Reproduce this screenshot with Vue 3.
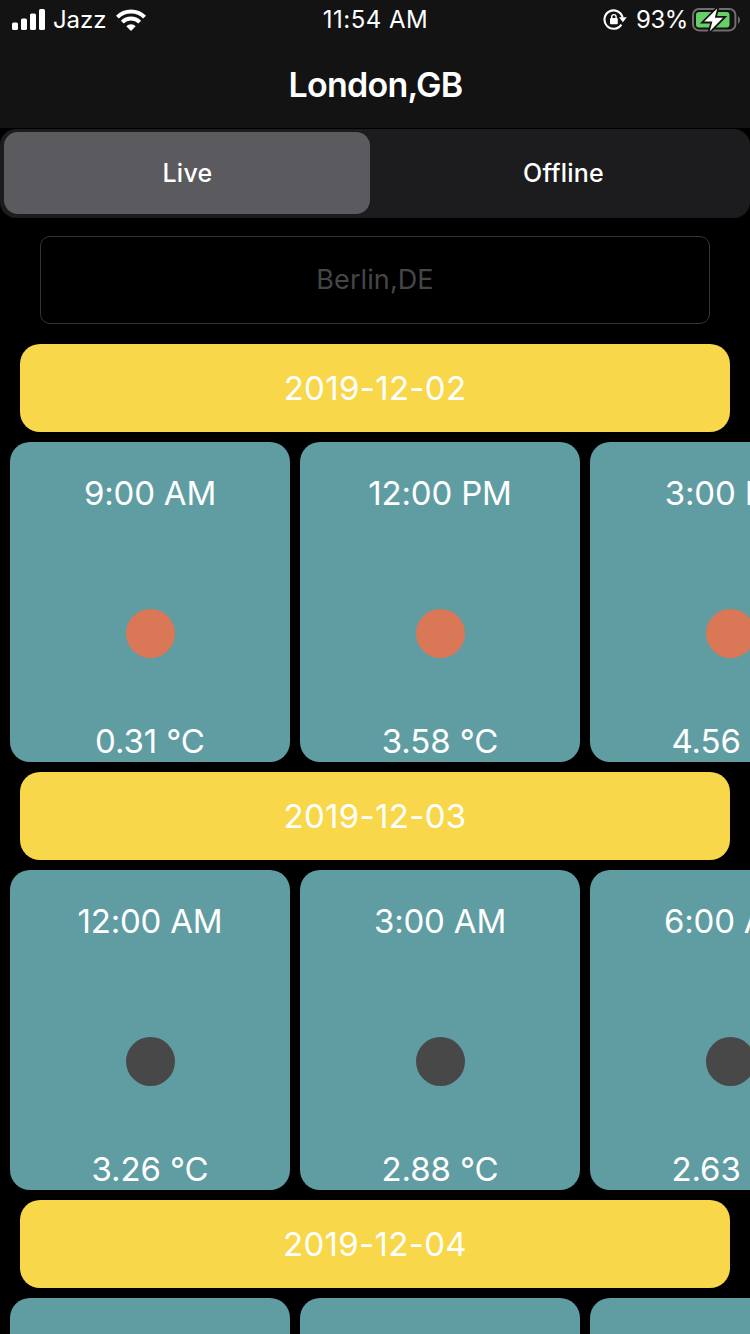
<script setup>
import { ref } from 'vue'

const modes = ['Live', 'Offline']
const mode = ref('Live')
const city = ref('')

const days = [
  {
    date: '2019-12-02',
    slots: [
      { time: '9:00 AM', temp: '0.31 °C', sky: 'sunny' },
      { time: '12:00 PM', temp: '3.58 °C', sky: 'sunny' },
      { time: '3:00 PM', temp: '4.56 °C', sky: 'sunny' },
    ],
  },
  {
    date: '2019-12-03',
    slots: [
      { time: '12:00 AM', temp: '3.26 °C', sky: 'night' },
      { time: '3:00 AM', temp: '2.88 °C', sky: 'night' },
      { time: '6:00 AM', temp: '2.63 °C', sky: 'night' },
    ],
  },
  {
    date: '2019-12-04',
    slots: [{ time: '', temp: '' }, { time: '', temp: '' }, { time: '', temp: '' }],
  },
]
</script>

<template>
  <main class="screen">
    <header class="top">
      <div class="status">
        <div class="side">
          <svg class="signal" width="34" height="22" viewBox="0 0 34 22" fill="#fff">
            <rect x="0" y="13.5" width="6" height="7.5" rx="1.6" />
            <rect x="9" y="9.5" width="6" height="11.5" rx="1.6" />
            <rect x="18" y="4.5" width="6" height="16.5" rx="1.6" />
            <rect x="27" y="0" width="6" height="21" rx="1.6" />
          </svg>
          <span class="carrier">Jazz</span>
          <svg class="wifi" width="30" height="22" viewBox="0 0 30 22" fill="none" stroke="#fff">
            <path d="M1.4 8.2a19.2 19.2 0 0 1 27.2 0" stroke-width="4" />
            <path d="M6.3 13.1a12.3 12.3 0 0 1 17.4 0" stroke-width="3.8" />
            <path d="M15 22l-4.7-4.8a6.6 6.6 0 0 1 9.4 0z" fill="#fff" stroke="none" />
          </svg>
        </div>
        <div class="clock">11:54 AM</div>
        <div class="side end">
          <svg class="lock" width="24" height="22" viewBox="0 0 24 22" fill="none">
            <path d="M19.6 8.4A9.2 9.2 0 1 0 18.4 15.6" stroke="#fff" stroke-width="2.1" />
            <path d="M16 8.2h7.8L19.9 13.2z" fill="#fff" />
            <rect x="7" y="9" width="7.8" height="6.2" rx="1" fill="#fff" />
            <path d="M8.7 9.6V7.8a2.2 2.2 0 0 1 4.4 0V9.6" stroke="#fff" stroke-width="1.4" />
          </svg>
          <span class="percent">93%</span>
          <svg class="battery" width="50" height="26" viewBox="0 0 50 26">
            <rect x="1" y="2" width="42.4" height="21.4" rx="6" fill="none" stroke="#6f6f6f" stroke-width="2" />
            <path d="M46 9v8q2-1.3 2-4t-2-4z" fill="#6f6f6f" />
            <rect x="4" y="5" width="33.5" height="15.5" rx="3" fill="#65cf68" />
            <path d="M25.2 1.5L12.2 14.6h8.2l-2.6 9.6 13.2-13.4h-8.2z" fill="#fff" stroke="#131313" stroke-width="3.6" paint-order="stroke" />
          </svg>
        </div>
      </div>
      <h1 class="title">London,GB</h1>
    </header>

    <div class="segmented">
      <button
        v-for="m in modes"
        :key="m"
        class="segment"
        :class="{ active: m === mode }"
        @click="mode = m"
      >{{ m }}</button>
    </div>

    <input v-model="city" class="city" placeholder="Berlin,DE" />

    <section v-for="day in days" :key="day.date" class="day">
      <h2 class="date">{{ day.date }}</h2>
      <div class="slots">
        <article v-for="(slot, i) in day.slots" :key="i" class="slot">
          <div class="time">{{ slot.time }}</div>
          <div class="dot" :class="slot.sky"></div>
          <div class="temp">{{ slot.temp }}</div>
        </article>
      </div>
    </section>
  </main>
</template>

<style>
body {
  background: #000;
}
</style>

<style scoped>
.screen {
  width: 750px;
  height: 1334px;
  overflow: hidden;
  background: #000;
  color: #fff;
  font-family: Inter, "Liberation Sans", sans-serif;
}

.top {
  height: 128px;
  background: #131313;
}

.status {
  display: grid;
  grid-template-columns: 1fr auto 1fr;
  align-items: center;
  height: 40px;
  font-size: 24px;
}

.side {
  display: flex;
  align-items: center;
  padding-left: 12px;
}

.end {
  justify-content: flex-end;
  padding: 0 8px 0 0;
}

.carrier {
  margin: 0 10px 2px 7px;
  letter-spacing: -0.1px;
}

.clock {
  margin-bottom: 1px;
  padding-left: 1px;
  font-size: 24px;
  letter-spacing: 0.5px;
}

.percent {
  margin: 0 4px 1px 9px;
  letter-spacing: -0.4px;
}

.title {
  margin: 23px 0 0;
  padding-left: 1px;
  font-size: 34px;
  line-height: 44px;
  font-weight: 600;
  letter-spacing: -0.75px;
  text-align: center;
}

.segmented {
  display: flex;
  box-sizing: border-box;
  height: 89px;
  margin-top: 1px;
  padding: 3px 4px 4px;
  gap: 10px;
  border-radius: 16px;
  background: #1c1c1e;
}

.segment {
  flex: 1;
  padding: 0 0 0 1px;
  border: 0;
  border-radius: 14px;
  background: none;
  color: #fff;
  font: 500 25px Inter, "Liberation Sans", sans-serif;
  letter-spacing: 0.2px;
}

.active {
  background: #5b5a5f;
  letter-spacing: 0.3px;
}

.city {
  display: block;
  box-sizing: border-box;
  width: 670px;
  height: 88px;
  margin: 18px auto 20px;
  padding: 0 0 2px;
  border: 1px solid #333;
  border-radius: 10px;
  outline: 0;
  background: #000;
  color: #fff;
  font: 400 27px Inter, "Liberation Sans", sans-serif;
  letter-spacing: 0.1px;
  text-align: center;
}

.city::placeholder {
  color: #464646;
  opacity: 1;
}

.date {
  height: 88px;
  margin: 0 20px 10px;
  border-radius: 20px;
  background: #f8d74a;
  font-size: 33px;
  line-height: 88px;
  font-weight: 400;
  letter-spacing: 0.3px;
  text-align: center;
}

.slots {
  display: flex;
  gap: 10px;
  padding: 0 10px 10px;
  overflow: hidden;
}

.slot {
  display: flex;
  flex: 0 0 280px;
  flex-direction: column;
  align-items: center;
  justify-content: space-between;
  box-sizing: border-box;
  height: 320px;
  padding: 31px 0 1px;
  border-radius: 20px;
  background: #609da3;
  font-size: 33px;
  line-height: 40px;
}

.time,
.temp {
  height: 40px;
  letter-spacing: -0.2px;
  white-space: nowrap;
}

.temp {
  letter-spacing: -0.1px;
}

.dot {
  width: 49px;
  height: 49px;
  margin: 33px 0 0 1px;
  border-radius: 50%;
}

.sunny {
  background: #d97757;
}

.night {
  background: #484848;
}
</style>
